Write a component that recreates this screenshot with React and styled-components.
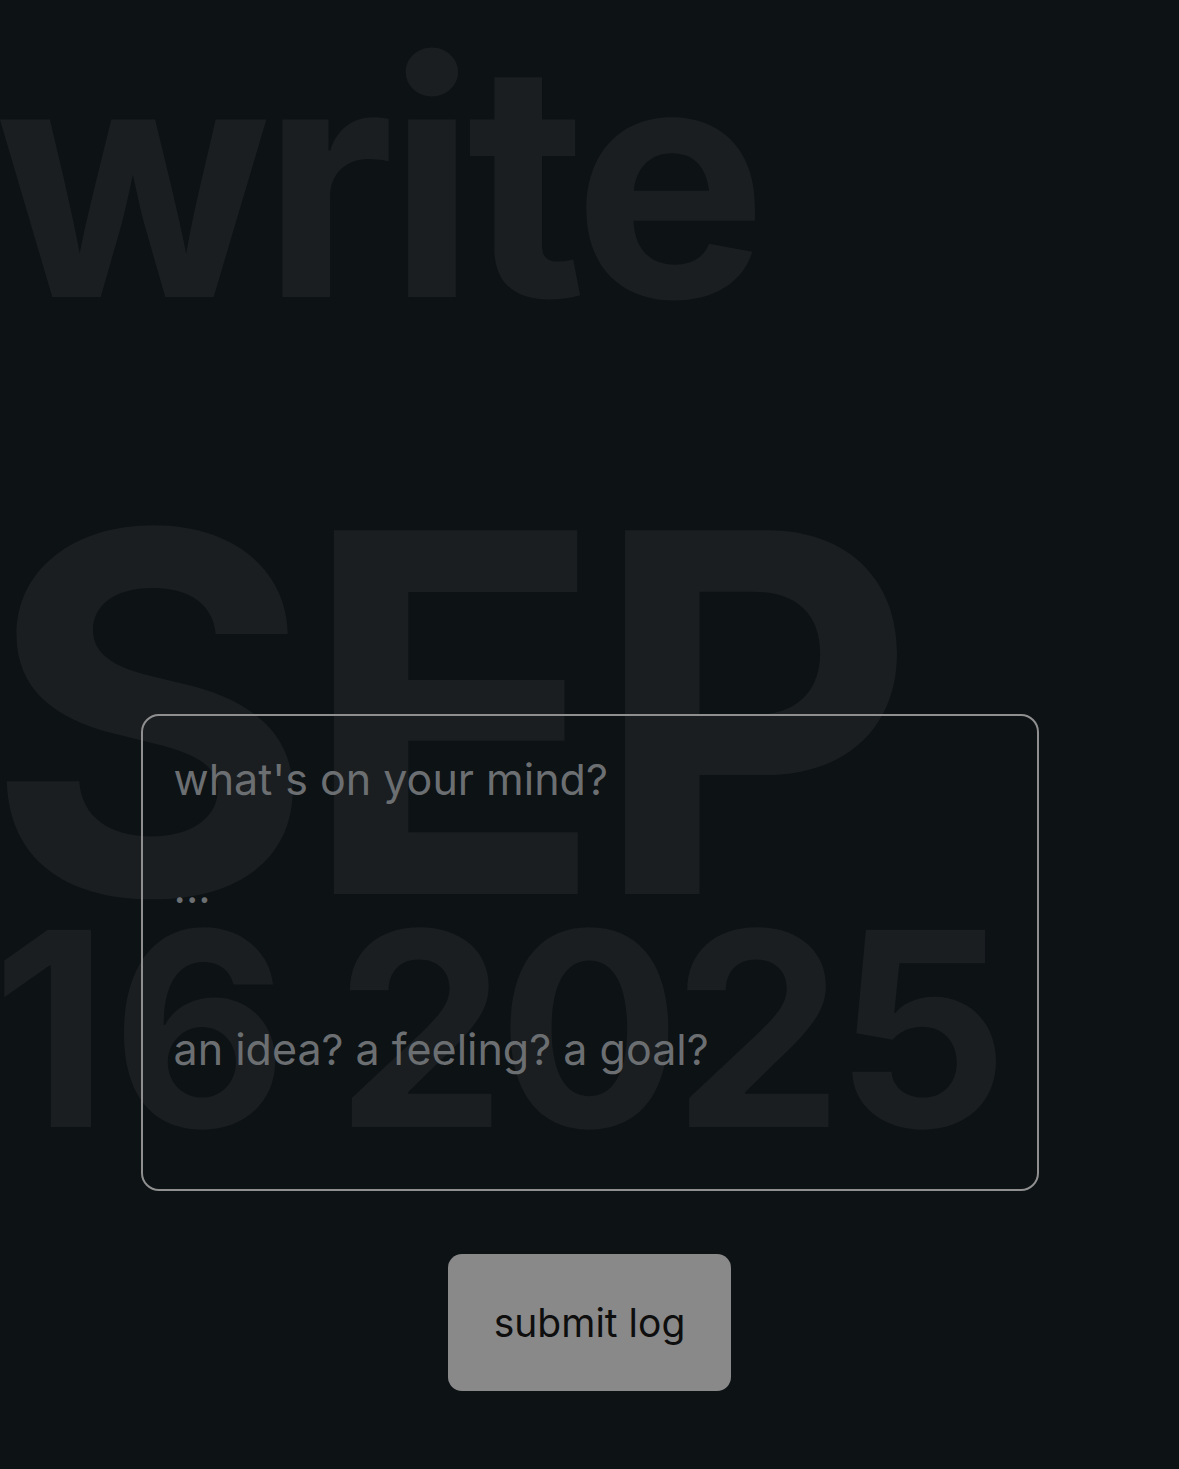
import React from 'react';
import styled, { createGlobalStyle } from 'styled-components';

const GlobalStyle = createGlobalStyle`
  html, body {
    margin: 0;
    padding: 0;
    background: #0d1215;
  }
  * {
    box-sizing: border-box;
  }
`;

// Page stacks the backdrop words and the form in one grid cell
const Page = styled.main`
  display: grid;
  min-height: 100vh;
  overflow: hidden;
  background: #0d1215;
  font-family: Inter, 'Noto Sans', sans-serif;
`;

const Backdrop = styled.div`
  grid-area: 1 / 1;
  display: flex;
  flex-direction: column;
  align-items: flex-start;
  pointer-events: none;
  user-select: none;
`;

const BigWord = styled.div`
  font-weight: 700;
  color: #1a1e21;
  white-space: nowrap;
  font-size: ${(p) => p.$size}px;
  line-height: ${(p) => p.$size}px;
  letter-spacing: ${(p) => p.$spacing || 0}em;
  margin-top: ${(p) => p.$top || 0}px;
  margin-left: ${(p) => p.$left || 0}px;
`;

const Digit = styled.span`
  margin-right: ${(p) => p.$gap}em;
`;

const Foreground = styled.div`
  grid-area: 1 / 1;
  display: flex;
  flex-direction: column;
  align-items: center;
  gap: 63px;
  padding-top: 714px;
  padding-bottom: 78px;
`;

const LogInput = styled.textarea`
  width: 898px;
  height: 477px;
  padding: 36px 31px;
  background: transparent;
  border: 2px solid #8f8f8f;
  border-radius: 18px;
  color: #d0d0d0;
  font-family: Inter, 'Noto Sans', sans-serif;
  font-size: 43px;
  line-height: 54px;
  resize: none;
  outline: none;

  &::placeholder {
    color: #6c6f72;
  }
`;

const SubmitButton = styled.button`
  width: 283px;
  height: 137px;
  border: none;
  border-radius: 14px;
  background: #898989;
  color: #0e0e0e;
  font-family: Inter, 'Noto Sans', sans-serif;
  font-size: 39px;
  cursor: pointer;
`;

const placeholder = "what's on your mind?\n\n...\n\n\nan idea? a feeling? a goal?";

export default function App() {
  return (
    <>
      <GlobalStyle />
      <Page>
        <Backdrop aria-hidden="true">
          <BigWord $size={325} $top={16} $left={-5} $spacing={-0.028}>write</BigWord>
          <BigWord $size={500} $top={122} $left={-14} $spacing={-0.025}>SEP</BigWord>
          <BigWord $size={271} $top={-70} $left={-8} $spacing={-0.03}>
            <Digit $gap={0.04}>1</Digit>6 2025
          </BigWord>
        </Backdrop>
        <Foreground>
          <LogInput placeholder={placeholder} />
          <SubmitButton>submit log</SubmitButton>
        </Foreground>
      </Page>
    </>
  );
}
